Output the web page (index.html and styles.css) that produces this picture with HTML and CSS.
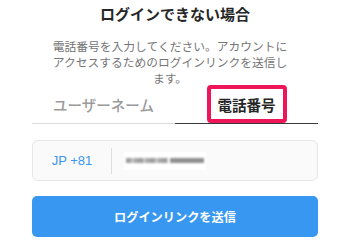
FILE: index.html
```html
<!DOCTYPE html>
<html lang="ja">
<head>
<meta charset="utf-8">
<link rel="stylesheet" href="styles.css">
</head>
<body>
<div class="page">
  <h1 class="title">ログインできない場合</h1>
  <p class="desc">電話番号を入力してください。アカウントにアクセスするためのログインリンクを送信します。</p>
  <div class="tabs">
    <div class="tab">ユーザーネーム</div>
    <div class="tab active"><span class="highlight">電話番号</span></div>
  </div>
  <div class="field">
    <div class="code">JP +81</div>
    <div class="divider"></div>
    <div class="masked"><span class="bar bar-a"></span><span class="bar bar-b"></span></div>
  </div>
  <button class="submit">ログインリンクを送信</button>
</div>
</body>
</html>
```
FILE: styles.css
```css
html, body {
  margin: 0;
  padding: 0;
  background: #ffffff;
}
body {
  font-family: "Noto Sans CJK JP", "Noto Sans", sans-serif;
  width: 340px;
  height: 250px;
  overflow: hidden;
}
.page {
  margin: 0 22px 0 32px;
  padding-top: 4px;
  display: flex;
  flex-direction: column;
}
.title {
  margin: 0;
  font-size: 15px;
  line-height: 20px;
  font-weight: 700;
  color: #262626;
  text-align: center;
}
.desc {
  margin: 14px 30px 0 20px;
  font-size: 11.75px;
  line-height: 16px;
  color: #757575;
  text-align: center;
}
.tabs {
  margin-top: -1px;
  display: flex;
}
.tab {
  flex: 1;
  height: 38px;
  display: flex;
  align-items: center;
  justify-content: center;
  font-size: 14.5px;
  font-weight: 500;
  color: #9a9a9a;
  border-bottom: 1px solid #dbdbdb;
}
.tab.active {
  color: #262626;
  font-weight: 700;
  border-bottom-color: #3a3a3a;
}
.highlight {
  box-sizing: border-box;
  height: 38px;
  padding: 0 7px;
  display: flex;
  align-items: center;
  border: 4px solid #ef1559;
  border-radius: 4px;
  background: #ffffff;
}
.field {
  margin-top: 16px;
  box-sizing: border-box;
  height: 41px;
  display: flex;
  align-items: center;
  background: #fafafa;
  border: 1px solid #e6e6e6;
  border-radius: 6px;
}
.code {
  width: 78px;
  text-align: center;
  font-family: "Liberation Sans", Arial, sans-serif;
  font-size: 13px;
  color: #3897f0;
}
.divider {
  width: 1px;
  height: 26px;
  background: #dedede;
}
.masked {
  margin-left: 12px;
  width: 82px;
  height: 18px;
  background: #ffffff;
  display: flex;
  align-items: center;
  padding: 0 2px;
  box-sizing: border-box;
  gap: 2px;
}
.bar {
  height: 5px;
  filter: blur(0.8px);
}
.bar-a {
  width: 42px;
  background: repeating-linear-gradient(90deg, #9c9c9c 0 5px, #c4c4c4 5px 8px, #a8a8a8 8px 12px);
}
.bar-b {
  width: 34px;
  background: #8f8f8f;
}
.submit {
  margin-top: 15px;
  height: 41px;
  border: none;
  border-radius: 5px;
  background: #3897f0;
  color: #ffffff;
  font-family: "Noto Sans CJK JP", sans-serif;
  font-size: 12.2px;
  font-weight: 700;
  padding: 0;
}
```
